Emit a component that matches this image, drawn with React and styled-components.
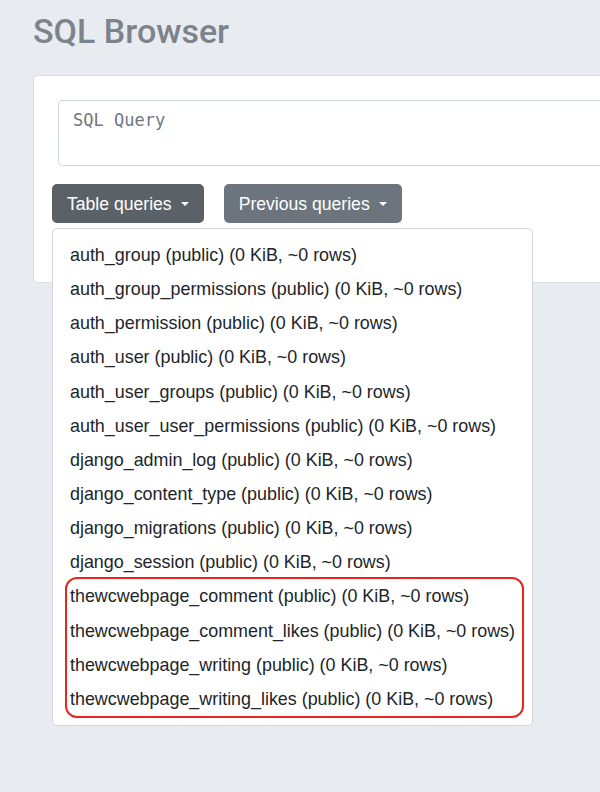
import styled, { createGlobalStyle } from "styled-components";

const GlobalStyle = createGlobalStyle`
    html, body {
        margin: 0;
        padding: 0;
        background-color: #e8ecf0;
        overflow: hidden;
    }
    * {
        box-sizing: border-box;
    }
`

const tables = [
    "auth_group",
    "auth_group_permissions",
    "auth_permission",
    "auth_user",
    "auth_user_groups",
    "auth_user_user_permissions",
    "django_admin_log",
    "django_content_type",
    "django_migrations",
    "django_session",
]

const highlighted = [
    "thewcwebpage_comment",
    "thewcwebpage_comment_likes",
    "thewcwebpage_writing",
    "thewcwebpage_writing_likes",
]

function label(name) {
    return `${name} (public) (0 KiB, ~0 rows)`
}

export default function App() {
    return (
        <Page>
            <GlobalStyle />
            <Title>SQL Browser</Title>
            <Card>
                <QueryInput placeholder="SQL Query" />
                <ButtonRow>
                    <DropdownWrap>
                        <DropdownButton $active>
                            Table queries
                            <Caret />
                        </DropdownButton>
                        <Menu>
                            {tables.map(name => (
                                <MenuItem key={name}>{label(name)}</MenuItem>
                            ))}
                            <Highlight>
                                {highlighted.map(name => (
                                    <MenuItem key={name} $inset>{label(name)}</MenuItem>
                                ))}
                            </Highlight>
                        </Menu>
                    </DropdownWrap>
                    <DropdownButton>
                        Previous queries
                        <Caret />
                    </DropdownButton>
                </ButtonRow>
            </Card>
        </Page>
    )
}

const Page = styled.div`
    display: flex;
    flex-direction: column;
    padding: 11px 0 0 33px;
    min-height: 792px;
    font-family: "Liberation Sans", Arial, sans-serif;
`

const Title = styled.h1`
    margin: 0 0 23px;
    height: 41px;
    font-family: Roboto, "Liberation Sans", sans-serif;
    font-size: 34px;
    font-weight: 500;
    line-height: 41px;
    color: #7d838b;
`

const Card = styled.section`
    width: 567px;
    margin-right: -40px;
    padding: 24px 0 59px 18px;
    background-color: #ffffff;
    border: 1px solid #d9dee4;
    border-right: none;
    border-radius: 5px 0 0 5px;
`

const QueryInput = styled.textarea`
    display: block;
    width: 560px;
    height: 66px;
    margin-left: 6px;
    padding: 7px 14px;
    border: 1px solid #ced4da;
    border-right: none;
    border-radius: 5px 0 0 5px;
    resize: none;
    font-family: "DejaVu Sans Mono", "Liberation Mono", monospace;
    font-size: 17px;
    line-height: 25px;
    color: #495057;
    background-color: #ffffff;

    &::placeholder {
        color: #70767d;
    }
`

const ButtonRow = styled.div`
    display: flex;
    flex-direction: row;
    gap: 20px;
    margin-top: 18px;
`

const DropdownWrap = styled.div`
    position: relative;
`

const DropdownButton = styled.button`
    display: flex;
    align-items: center;
    height: 39px;
    padding: 0 15px;
    border: none;
    border-radius: 5px;
    background-color: ${props => props.$active ? '#5a6268' : '#6c757d'};
    color: #ffffff;
    font-family: "Liberation Sans", Arial, sans-serif;
    font-size: 17.6px;
    line-height: 24px;
`

const Caret = styled.span`
    display: inline-block;
    margin-left: 9px;
    width: 0;
    height: 0;
    border-top: 4px solid #ffffff;
    border-left: 4px solid transparent;
    border-right: 4px solid transparent;
`

const Menu = styled.div`
    position: absolute;
    top: 44px;
    left: 0;
    width: 481px;
    padding: 9px 0;
    background-color: #ffffff;
    border: 1px solid #d2d5d9;
    border-radius: 5px;
    display: flex;
    flex-direction: column;
`

const MenuItem = styled.div`
    height: 34.15px;
    padding: 5px ${props => props.$inset ? '0 5px 3px' : '0 5px 17px'};
    font-size: 17.9px;
    line-height: 24px;
    color: #212529;
    white-space: nowrap;
`

const Highlight = styled.div`
    margin: 0 10px 0 14px;
    outline: 2px solid #e8271c;
    border-radius: 10px;
`
